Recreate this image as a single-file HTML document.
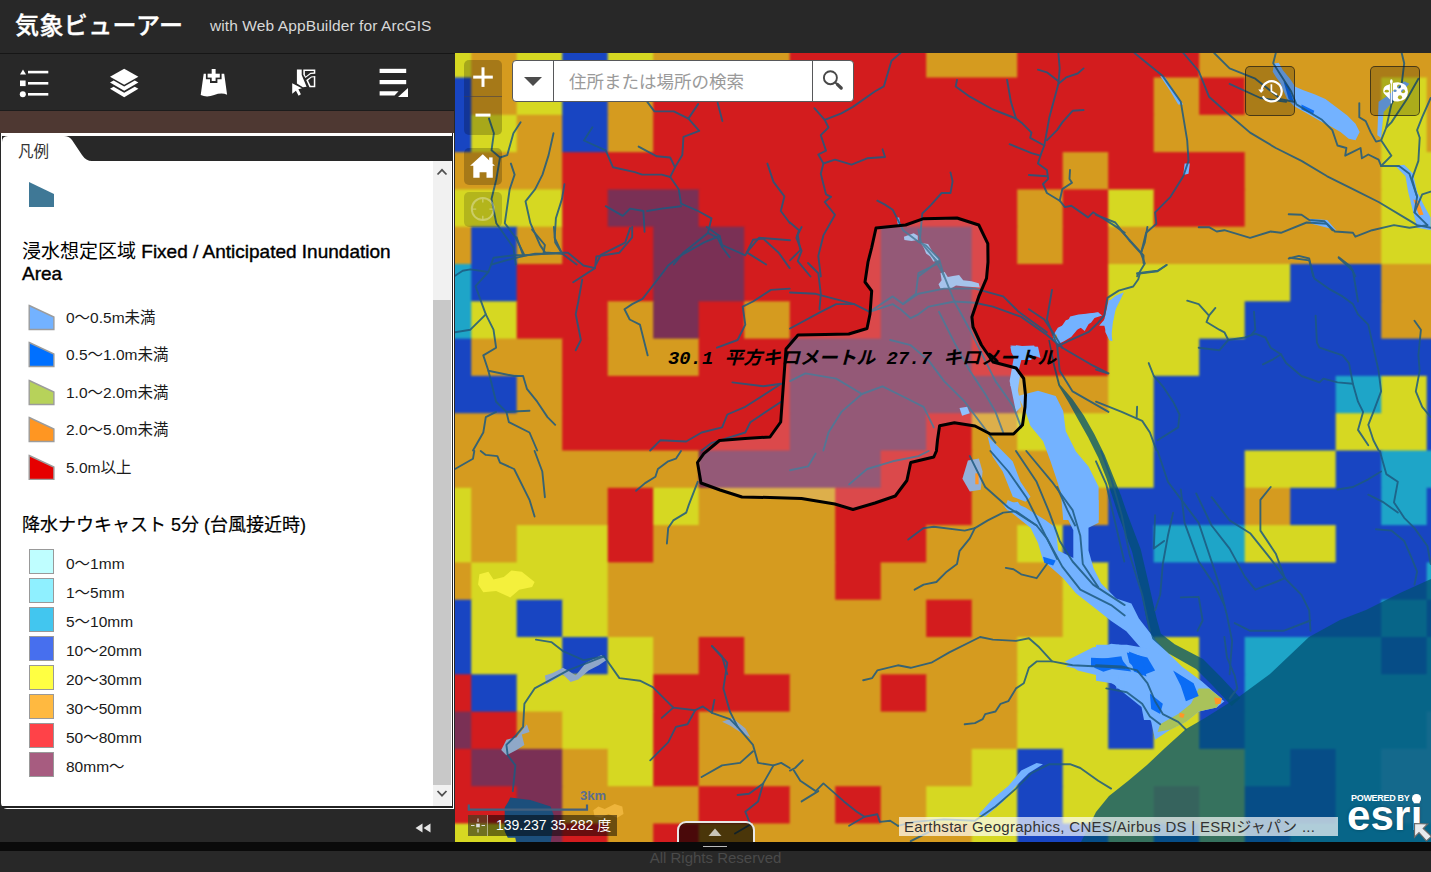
<!DOCTYPE html>
<html lang="ja"><head><meta charset="utf-8"><title>気象ビューアー</title>
<style>
*{box-sizing:border-box;margin:0;padding:0}
html,body{width:1431px;height:872px;overflow:hidden;background:#282828;font-family:"Liberation Sans","Noto Sans CJK JP",sans-serif}
.abs{position:absolute}
#hdr{left:0;top:0;width:1431px;height:54px;background:#282828;border-bottom:1px solid #161616}
#title{left:15px;top:9px;font-size:24px;font-weight:500;-webkit-text-stroke:.35px #fff;color:#fff;line-height:34px;white-space:nowrap;letter-spacing:.4px}
#sub{left:210px;top:16px;letter-spacing:.1px;font-size:15.5px;color:#d8d8d8;line-height:20px;white-space:nowrap}
#iconbar{left:0;top:54px;width:454px;height:56px;background:#282828}
#brown{left:0;top:110px;width:454px;height:23px;background:#4e3832;border-top:1px solid #1c1c1c}
#panel{left:1px;top:133px;width:453px;height:676px;background:#fff;border-radius:0 0 0 6px}
#tabstrip{left:2px;top:136px;width:450px;height:25px;background:#282828}
#lfoot{left:0;top:809px;width:454px;height:33px;background:#282828}
#strip{left:0;top:842px;width:1431px;height:9px;background:#0a0a0a}
#foot{left:0;top:851px;width:1431px;height:21px;background:#282828;color:#4a4a4a;font-size:15px;text-align:center;line-height:13px}
.lh{left:22px;font-size:19px;font-weight:normal;color:#000;line-height:22px;width:400px;-webkit-text-stroke:.4px #000}
.li{left:66px;font-size:15.5px;letter-spacing:0;color:#1a1a1a;line-height:18px;white-space:nowrap}
.sq{left:29px;width:25px;height:25px;border:1px solid #999}
#map{left:455px;top:53px;width:976px;height:789px;overflow:hidden}
.wbtn{background:rgba(0,0,0,.22);border-radius:5px}
</style></head><body>
<div id="hdr" class="abs"></div>
<div id="title" class="abs">気象ビューアー</div>
<div id="sub" class="abs">with Web AppBuilder for ArcGIS</div>
<div id="iconbar" class="abs"></div>
<div id="brown" class="abs"></div>
<div id="panel" class="abs"></div>
<div id="tabstrip" class="abs"></div>
<div id="lfoot" class="abs"></div>

<!-- map -->
<svg id="map" class="abs" viewBox="455 53 976 789">
<defs><filter id="gb" x="445" y="43" width="996" height="809" filterUnits="userSpaceOnUse" color-interpolation-filters="sRGB"><feGaussianBlur stdDeviation="1"/></filter></defs>
<g filter="url(#gb)">
<rect x="449" y="47" width="23.5" height="31.8" fill="#d6d822"/>
<rect x="471.2" y="47" width="46.8" height="31.8" fill="#d59b1f"/>
<rect x="516.7" y="47" width="46.8" height="31.8" fill="#d6d822"/>
<rect x="562.2" y="47" width="46.8" height="31.8" fill="#1845c2"/>
<rect x="607.7" y="47" width="46.8" height="31.8" fill="#d6d822"/>
<rect x="653.2" y="47" width="137.8" height="31.8" fill="#d59b1f"/>
<rect x="789.7" y="47" width="137.8" height="31.8" fill="#d31c1e"/>
<rect x="926.2" y="47" width="92.3" height="31.8" fill="#d59b1f"/>
<rect x="1017.2" y="47" width="183.3" height="31.8" fill="#d31c1e"/>
<rect x="1199.2" y="47" width="239.1" height="31.8" fill="#d59b1f"/>
<rect x="449" y="77.5" width="23.5" height="38.6" fill="#1845c2"/>
<rect x="471.2" y="77.5" width="46.8" height="38.6" fill="#d59b1f"/>
<rect x="516.7" y="77.5" width="46.8" height="38.6" fill="#d6d822"/>
<rect x="562.2" y="77.5" width="46.8" height="38.6" fill="#1845c2"/>
<rect x="607.7" y="77.5" width="46.8" height="38.6" fill="#d59b1f"/>
<rect x="653.2" y="77.5" width="501.8" height="38.6" fill="#d31c1e"/>
<rect x="1153.7" y="77.5" width="46.8" height="38.6" fill="#d59b1f"/>
<rect x="1199.2" y="77.5" width="46.8" height="38.6" fill="#d31c1e"/>
<rect x="1244.7" y="77.5" width="137.8" height="38.6" fill="#d59b1f"/>
<rect x="1381.2" y="77.5" width="46.8" height="38.6" fill="#d6d822"/>
<rect x="1426.7" y="77.5" width="11.6" height="38.6" fill="#d59b1f"/>
<rect x="449" y="114.8" width="23.5" height="38.6" fill="#1845c2"/>
<rect x="471.2" y="114.8" width="46.8" height="38.6" fill="#d6d822"/>
<rect x="516.7" y="114.8" width="46.8" height="38.6" fill="#d59b1f"/>
<rect x="562.2" y="114.8" width="46.8" height="38.6" fill="#1845c2"/>
<rect x="607.7" y="114.8" width="46.8" height="38.6" fill="#d59b1f"/>
<rect x="653.2" y="114.8" width="501.8" height="38.6" fill="#d31c1e"/>
<rect x="1153.7" y="114.8" width="228.8" height="38.6" fill="#d59b1f"/>
<rect x="1381.2" y="114.8" width="46.8" height="38.6" fill="#d6d822"/>
<rect x="1426.7" y="114.8" width="11.6" height="38.6" fill="#d59b1f"/>
<rect x="449" y="152.1" width="114.5" height="38.6" fill="#d59b1f"/>
<rect x="562.2" y="152.1" width="501.8" height="38.6" fill="#d31c1e"/>
<rect x="1062.7" y="152.1" width="46.8" height="38.6" fill="#d59b1f"/>
<rect x="1108.2" y="152.1" width="137.8" height="38.6" fill="#d31c1e"/>
<rect x="1244.7" y="152.1" width="137.8" height="38.6" fill="#d59b1f"/>
<rect x="1381.2" y="152.1" width="57.1" height="38.6" fill="#d6d822"/>
<rect x="449" y="189.4" width="114.5" height="38.6" fill="#d6d822"/>
<rect x="562.2" y="189.4" width="46.8" height="38.6" fill="#d31c1e"/>
<rect x="607.7" y="189.4" width="92.3" height="38.6" fill="#7a3055"/>
<rect x="698.7" y="189.4" width="319.8" height="38.6" fill="#d31c1e"/>
<rect x="1017.2" y="189.4" width="46.8" height="38.6" fill="#d59b1f"/>
<rect x="1062.7" y="189.4" width="46.8" height="38.6" fill="#d31c1e"/>
<rect x="1108.2" y="189.4" width="46.8" height="38.6" fill="#d6d822"/>
<rect x="1153.7" y="189.4" width="92.3" height="38.6" fill="#d31c1e"/>
<rect x="1244.7" y="189.4" width="137.8" height="38.6" fill="#d59b1f"/>
<rect x="1381.2" y="189.4" width="57.1" height="38.6" fill="#d6d822"/>
<rect x="449" y="226.7" width="23.5" height="38.6" fill="#d59b1f"/>
<rect x="471.2" y="226.7" width="46.8" height="38.6" fill="#1845c2"/>
<rect x="516.7" y="226.7" width="46.8" height="38.6" fill="#d59b1f"/>
<rect x="562.2" y="226.7" width="92.3" height="38.6" fill="#d31c1e"/>
<rect x="653.2" y="226.7" width="92.3" height="38.6" fill="#7a3055"/>
<rect x="744.2" y="226.7" width="137.8" height="38.6" fill="#d31c1e"/>
<rect x="880.7" y="226.7" width="92.3" height="38.6" fill="#7a3055"/>
<rect x="971.7" y="226.7" width="46.8" height="38.6" fill="#d31c1e"/>
<rect x="1017.2" y="226.7" width="46.8" height="38.6" fill="#d59b1f"/>
<rect x="1062.7" y="226.7" width="46.8" height="38.6" fill="#d31c1e"/>
<rect x="1108.2" y="226.7" width="274.3" height="38.6" fill="#d59b1f"/>
<rect x="1381.2" y="226.7" width="57.1" height="38.6" fill="#d6d822"/>
<rect x="449" y="264" width="23.5" height="38.6" fill="#1ea5c8"/>
<rect x="471.2" y="264" width="46.8" height="38.6" fill="#1845c2"/>
<rect x="516.7" y="264" width="137.8" height="38.6" fill="#d31c1e"/>
<rect x="653.2" y="264" width="92.3" height="38.6" fill="#7a3055"/>
<rect x="744.2" y="264" width="137.8" height="38.6" fill="#d31c1e"/>
<rect x="880.7" y="264" width="92.3" height="38.6" fill="#7a3055"/>
<rect x="971.7" y="264" width="137.8" height="38.6" fill="#d31c1e"/>
<rect x="1108.2" y="264" width="183.3" height="38.6" fill="#d6d822"/>
<rect x="1290.2" y="264" width="92.3" height="38.6" fill="#1845c2"/>
<rect x="1381.2" y="264" width="57.1" height="38.6" fill="#d59b1f"/>
<rect x="449" y="301.3" width="23.5" height="38.6" fill="#1ea5c8"/>
<rect x="471.2" y="301.3" width="46.8" height="38.6" fill="#d6d822"/>
<rect x="516.7" y="301.3" width="92.3" height="38.6" fill="#d31c1e"/>
<rect x="607.7" y="301.3" width="46.8" height="38.6" fill="#d59b1f"/>
<rect x="653.2" y="301.3" width="46.8" height="38.6" fill="#7a3055"/>
<rect x="698.7" y="301.3" width="46.8" height="38.6" fill="#d31c1e"/>
<rect x="744.2" y="301.3" width="46.8" height="38.6" fill="#d59b1f"/>
<rect x="789.7" y="301.3" width="92.3" height="38.6" fill="#d31c1e"/>
<rect x="880.7" y="301.3" width="92.3" height="38.6" fill="#7a3055"/>
<rect x="971.7" y="301.3" width="137.8" height="38.6" fill="#d31c1e"/>
<rect x="1108.2" y="301.3" width="137.8" height="38.6" fill="#d6d822"/>
<rect x="1244.7" y="301.3" width="137.8" height="38.6" fill="#1845c2"/>
<rect x="1381.2" y="301.3" width="57.1" height="38.6" fill="#d59b1f"/>
<rect x="449" y="338.6" width="23.5" height="38.6" fill="#1845c2"/>
<rect x="471.2" y="338.6" width="92.3" height="38.6" fill="#d59b1f"/>
<rect x="562.2" y="338.6" width="46.8" height="38.6" fill="#d31c1e"/>
<rect x="607.7" y="338.6" width="92.3" height="38.6" fill="#d59b1f"/>
<rect x="698.7" y="338.6" width="92.3" height="38.6" fill="#d31c1e"/>
<rect x="789.7" y="338.6" width="183.3" height="38.6" fill="#7a3055"/>
<rect x="971.7" y="338.6" width="137.8" height="38.6" fill="#d31c1e"/>
<rect x="1108.2" y="338.6" width="92.3" height="38.6" fill="#d6d822"/>
<rect x="1199.2" y="338.6" width="239.1" height="38.6" fill="#1845c2"/>
<rect x="449" y="375.9" width="69" height="38.6" fill="#1845c2"/>
<rect x="516.7" y="375.9" width="46.8" height="38.6" fill="#d59b1f"/>
<rect x="562.2" y="375.9" width="228.8" height="38.6" fill="#d31c1e"/>
<rect x="789.7" y="375.9" width="228.8" height="38.6" fill="#7a3055"/>
<rect x="1017.2" y="375.9" width="92.3" height="38.6" fill="#d59b1f"/>
<rect x="1108.2" y="375.9" width="46.8" height="38.6" fill="#d6d822"/>
<rect x="1153.7" y="375.9" width="183.3" height="38.6" fill="#1845c2"/>
<rect x="1335.7" y="375.9" width="46.8" height="38.6" fill="#1ea5c8"/>
<rect x="1381.2" y="375.9" width="46.8" height="38.6" fill="#d6d822"/>
<rect x="1426.7" y="375.9" width="11.6" height="38.6" fill="#1845c2"/>
<rect x="449" y="413.2" width="114.5" height="38.6" fill="#d59b1f"/>
<rect x="562.2" y="413.2" width="228.8" height="38.6" fill="#d31c1e"/>
<rect x="789.7" y="413.2" width="137.8" height="38.6" fill="#7a3055"/>
<rect x="926.2" y="413.2" width="46.8" height="38.6" fill="#d31c1e"/>
<rect x="971.7" y="413.2" width="46.8" height="38.6" fill="#d59b1f"/>
<rect x="1017.2" y="413.2" width="137.8" height="38.6" fill="#d6d822"/>
<rect x="1153.7" y="413.2" width="183.3" height="38.6" fill="#1845c2"/>
<rect x="1335.7" y="413.2" width="92.3" height="38.6" fill="#d6d822"/>
<rect x="1426.7" y="413.2" width="11.6" height="38.6" fill="#1845c2"/>
<rect x="449" y="450.5" width="251" height="38.6" fill="#d59b1f"/>
<rect x="698.7" y="450.5" width="183.3" height="38.6" fill="#7a3055"/>
<rect x="880.7" y="450.5" width="92.3" height="38.6" fill="#d31c1e"/>
<rect x="971.7" y="450.5" width="92.3" height="38.6" fill="#d59b1f"/>
<rect x="1062.7" y="450.5" width="92.3" height="38.6" fill="#d6d822"/>
<rect x="1153.7" y="450.5" width="92.3" height="38.6" fill="#1845c2"/>
<rect x="1244.7" y="450.5" width="92.3" height="38.6" fill="#d6d822"/>
<rect x="1335.7" y="450.5" width="46.8" height="38.6" fill="#1845c2"/>
<rect x="1381.2" y="450.5" width="57.1" height="38.6" fill="#1ea5c8"/>
<rect x="449" y="487.8" width="23.5" height="38.6" fill="#d6d822"/>
<rect x="471.2" y="487.8" width="137.8" height="38.6" fill="#d59b1f"/>
<rect x="607.7" y="487.8" width="46.8" height="38.6" fill="#d31c1e"/>
<rect x="653.2" y="487.8" width="46.8" height="38.6" fill="#d6d822"/>
<rect x="698.7" y="487.8" width="137.8" height="38.6" fill="#d59b1f"/>
<rect x="835.2" y="487.8" width="137.8" height="38.6" fill="#d31c1e"/>
<rect x="971.7" y="487.8" width="137.8" height="38.6" fill="#d59b1f"/>
<rect x="1108.2" y="487.8" width="137.8" height="38.6" fill="#1845c2"/>
<rect x="1244.7" y="487.8" width="46.8" height="38.6" fill="#d59b1f"/>
<rect x="1290.2" y="487.8" width="92.3" height="38.6" fill="#1845c2"/>
<rect x="1381.2" y="487.8" width="46.8" height="38.6" fill="#1ea5c8"/>
<rect x="1426.7" y="487.8" width="11.6" height="38.6" fill="#1845c2"/>
<rect x="449" y="525.1" width="23.5" height="38.6" fill="#d6d822"/>
<rect x="471.2" y="525.1" width="46.8" height="38.6" fill="#d59b1f"/>
<rect x="516.7" y="525.1" width="92.3" height="38.6" fill="#d6d822"/>
<rect x="607.7" y="525.1" width="46.8" height="38.6" fill="#d31c1e"/>
<rect x="653.2" y="525.1" width="183.3" height="38.6" fill="#d59b1f"/>
<rect x="835.2" y="525.1" width="92.3" height="38.6" fill="#d31c1e"/>
<rect x="926.2" y="525.1" width="92.3" height="38.6" fill="#d59b1f"/>
<rect x="1017.2" y="525.1" width="46.8" height="38.6" fill="#d6d822"/>
<rect x="1062.7" y="525.1" width="92.3" height="38.6" fill="#1845c2"/>
<rect x="1153.7" y="525.1" width="92.3" height="38.6" fill="#1ea5c8"/>
<rect x="1244.7" y="525.1" width="92.3" height="38.6" fill="#d6d822"/>
<rect x="1335.7" y="525.1" width="102.6" height="38.6" fill="#1845c2"/>
<rect x="449" y="562.4" width="23.5" height="38.6" fill="#d59b1f"/>
<rect x="471.2" y="562.4" width="137.8" height="38.6" fill="#d6d822"/>
<rect x="607.7" y="562.4" width="228.8" height="38.6" fill="#d59b1f"/>
<rect x="835.2" y="562.4" width="46.8" height="38.6" fill="#d31c1e"/>
<rect x="880.7" y="562.4" width="183.3" height="38.6" fill="#d59b1f"/>
<rect x="1062.7" y="562.4" width="46.8" height="38.6" fill="#d6d822"/>
<rect x="1108.2" y="562.4" width="319.8" height="38.6" fill="#1845c2"/>
<rect x="1426.7" y="562.4" width="11.6" height="38.6" fill="#1ea5c8"/>
<rect x="449" y="599.7" width="23.5" height="38.6" fill="#1845c2"/>
<rect x="471.2" y="599.7" width="46.8" height="38.6" fill="#d6d822"/>
<rect x="516.7" y="599.7" width="46.8" height="38.6" fill="#1845c2"/>
<rect x="562.2" y="599.7" width="46.8" height="38.6" fill="#d6d822"/>
<rect x="607.7" y="599.7" width="319.8" height="38.6" fill="#d59b1f"/>
<rect x="926.2" y="599.7" width="46.8" height="38.6" fill="#d31c1e"/>
<rect x="971.7" y="599.7" width="92.3" height="38.6" fill="#d59b1f"/>
<rect x="1062.7" y="599.7" width="46.8" height="38.6" fill="#d6d822"/>
<rect x="1108.2" y="599.7" width="274.3" height="38.6" fill="#1845c2"/>
<rect x="1381.2" y="599.7" width="46.8" height="38.6" fill="#1ea5c8"/>
<rect x="1426.7" y="599.7" width="11.6" height="38.6" fill="#1845c2"/>
<rect x="449" y="637" width="23.5" height="38.6" fill="#1845c2"/>
<rect x="471.2" y="637" width="92.3" height="38.6" fill="#d6d822"/>
<rect x="562.2" y="637" width="46.8" height="38.6" fill="#1845c2"/>
<rect x="607.7" y="637" width="46.8" height="38.6" fill="#d6d822"/>
<rect x="653.2" y="637" width="46.8" height="38.6" fill="#d59b1f"/>
<rect x="698.7" y="637" width="46.8" height="38.6" fill="#d31c1e"/>
<rect x="744.2" y="637" width="274.3" height="38.6" fill="#d59b1f"/>
<rect x="1017.2" y="637" width="92.3" height="38.6" fill="#d6d822"/>
<rect x="1108.2" y="637" width="46.8" height="38.6" fill="#1845c2"/>
<rect x="1153.7" y="637" width="46.8" height="38.6" fill="#d6d822"/>
<rect x="1199.2" y="637" width="46.8" height="38.6" fill="#1845c2"/>
<rect x="1244.7" y="637" width="137.8" height="38.6" fill="#1ea5c8"/>
<rect x="1381.2" y="637" width="46.8" height="38.6" fill="#1845c2"/>
<rect x="1426.7" y="637" width="11.6" height="38.6" fill="#1ea5c8"/>
<rect x="449" y="674.3" width="23.5" height="38.6" fill="#d31c1e"/>
<rect x="471.2" y="674.3" width="46.8" height="38.6" fill="#1845c2"/>
<rect x="516.7" y="674.3" width="137.8" height="38.6" fill="#d6d822"/>
<rect x="653.2" y="674.3" width="137.8" height="38.6" fill="#d31c1e"/>
<rect x="789.7" y="674.3" width="92.3" height="38.6" fill="#d59b1f"/>
<rect x="880.7" y="674.3" width="46.8" height="38.6" fill="#d31c1e"/>
<rect x="926.2" y="674.3" width="92.3" height="38.6" fill="#d59b1f"/>
<rect x="1017.2" y="674.3" width="92.3" height="38.6" fill="#d6d822"/>
<rect x="1108.2" y="674.3" width="46.8" height="38.6" fill="#1845c2"/>
<rect x="1153.7" y="674.3" width="46.8" height="38.6" fill="#d6d822"/>
<rect x="1199.2" y="674.3" width="46.8" height="38.6" fill="#1845c2"/>
<rect x="1244.7" y="674.3" width="193.6" height="38.6" fill="#1ea5c8"/>
<rect x="449" y="711.6" width="23.5" height="38.6" fill="#7a3055"/>
<rect x="471.2" y="711.6" width="46.8" height="38.6" fill="#d31c1e"/>
<rect x="516.7" y="711.6" width="46.8" height="38.6" fill="#d59b1f"/>
<rect x="562.2" y="711.6" width="92.3" height="38.6" fill="#d6d822"/>
<rect x="653.2" y="711.6" width="46.8" height="38.6" fill="#d31c1e"/>
<rect x="698.7" y="711.6" width="319.8" height="38.6" fill="#d59b1f"/>
<rect x="1017.2" y="711.6" width="92.3" height="38.6" fill="#d6d822"/>
<rect x="1108.2" y="711.6" width="46.8" height="38.6" fill="#1845c2"/>
<rect x="1153.7" y="711.6" width="46.8" height="38.6" fill="#d6d822"/>
<rect x="1199.2" y="711.6" width="46.8" height="38.6" fill="#1845c2"/>
<rect x="1244.7" y="711.6" width="183.3" height="38.6" fill="#1ea5c8"/>
<rect x="1426.7" y="711.6" width="11.6" height="38.6" fill="#50b4d7"/>
<rect x="449" y="748.9" width="23.5" height="38.6" fill="#d31c1e"/>
<rect x="471.2" y="748.9" width="92.3" height="38.6" fill="#7a3055"/>
<rect x="562.2" y="748.9" width="46.8" height="38.6" fill="#d59b1f"/>
<rect x="607.7" y="748.9" width="46.8" height="38.6" fill="#d6d822"/>
<rect x="653.2" y="748.9" width="46.8" height="38.6" fill="#d31c1e"/>
<rect x="698.7" y="748.9" width="274.3" height="38.6" fill="#d59b1f"/>
<rect x="971.7" y="748.9" width="46.8" height="38.6" fill="#d6d822"/>
<rect x="1017.2" y="748.9" width="46.8" height="38.6" fill="#1845c2"/>
<rect x="1062.7" y="748.9" width="183.3" height="38.6" fill="#d6d822"/>
<rect x="1244.7" y="748.9" width="46.8" height="38.6" fill="#1ea5c8"/>
<rect x="1290.2" y="748.9" width="46.8" height="38.6" fill="#1845c2"/>
<rect x="1335.7" y="748.9" width="46.8" height="38.6" fill="#1ea5c8"/>
<rect x="1381.2" y="748.9" width="57.1" height="38.6" fill="#50b4d7"/>
<rect x="449" y="786.2" width="69" height="38.6" fill="#d31c1e"/>
<rect x="516.7" y="786.2" width="46.8" height="38.6" fill="#7a3055"/>
<rect x="562.2" y="786.2" width="137.8" height="38.6" fill="#d59b1f"/>
<rect x="698.7" y="786.2" width="92.3" height="38.6" fill="#d31c1e"/>
<rect x="789.7" y="786.2" width="46.8" height="38.6" fill="#d59b1f"/>
<rect x="835.2" y="786.2" width="46.8" height="38.6" fill="#d31c1e"/>
<rect x="880.7" y="786.2" width="46.8" height="38.6" fill="#d59b1f"/>
<rect x="926.2" y="786.2" width="92.3" height="38.6" fill="#d6d822"/>
<rect x="1017.2" y="786.2" width="46.8" height="38.6" fill="#1845c2"/>
<rect x="1062.7" y="786.2" width="92.3" height="38.6" fill="#d6d822"/>
<rect x="1153.7" y="786.2" width="46.8" height="38.6" fill="#d59b1f"/>
<rect x="1199.2" y="786.2" width="46.8" height="38.6" fill="#d6d822"/>
<rect x="1244.7" y="786.2" width="92.3" height="38.6" fill="#1845c2"/>
<rect x="1335.7" y="786.2" width="46.8" height="38.6" fill="#1ea5c8"/>
<rect x="1381.2" y="786.2" width="57.1" height="38.6" fill="#50b4d7"/>
<rect x="449" y="823.5" width="69" height="25.8" fill="#d6d822"/>
<rect x="516.7" y="823.5" width="46.8" height="25.8" fill="#7a3055"/>
<rect x="562.2" y="823.5" width="46.8" height="25.8" fill="#d31c1e"/>
<rect x="607.7" y="823.5" width="46.8" height="25.8" fill="#d59b1f"/>
<rect x="653.2" y="823.5" width="46.8" height="25.8" fill="#d31c1e"/>
<rect x="698.7" y="823.5" width="274.3" height="25.8" fill="#d59b1f"/>
<rect x="971.7" y="823.5" width="46.8" height="25.8" fill="#d6d822"/>
<rect x="1017.2" y="823.5" width="92.3" height="25.8" fill="#1845c2"/>
<rect x="1108.2" y="823.5" width="46.8" height="25.8" fill="#d6d822"/>
<rect x="1153.7" y="823.5" width="46.8" height="25.8" fill="#1845c2"/>
<rect x="1199.2" y="823.5" width="46.8" height="25.8" fill="#d6d822"/>
<rect x="1244.7" y="823.5" width="46.8" height="25.8" fill="#1845c2"/>
<rect x="1290.2" y="823.5" width="148.1" height="25.8" fill="#1ea5c8"/>
</g>
<g stroke="none"><polygon points="1017.8,395.9 1038.0,390.8 1055.7,395.9 1063.2,411.0 1065.8,431.2 1075.9,451.4 1088.5,466.5 1098.6,486.7 1098.6,520.0 1063.2,520.0 1060.7,491.7 1050.6,461.5 1043.1,441.3 1030.5,426.1 1025.4,411.0" fill="#73b2ff"/>
<polygon points="987.6,436.2 997.7,446.3 1012.8,461.5 1020.4,481.6 1030.5,496.8 1025.4,501.8 1012.8,496.8 1002.7,471.5 992.6,456.4" fill="#73b2ff"/>
<polygon points="1065.8,320.2 1086.0,313.9 1098.6,312.6 1091.0,322.7 1075.9,330.3 1063.2,337.8 1055.7,335.3" fill="#73b2ff"/>
<polygon points="1108.7,300.0 1118.7,300.0 1113.7,315.1 1111.2,337.8 1106.1,332.8 1103.6,322.7" fill="#73b2ff"/>
<polygon points="1010.3,345.4 1038.0,346.7 1040.5,358.0 1030.5,354.2 1017.8,353.0" fill="#73b2ff"/>
<polygon points="1012.8,375.7 1020.4,373.2 1017.8,390.8 1010.3,385.8" fill="#73b2ff"/>
<polygon points="1002.7,504.3 1017.8,501.8 1022.9,509.4 1007.7,510.6" fill="#73b2ff"/>
<polygon points="1063.2,500.0 1098.6,500.0 1098.6,522.7 1088.5,527.7 1088.5,550.5 1093.5,568.1 1101.1,583.2 1116.2,598.4 1131.4,603.4 1138.9,618.6 1156.6,641.3 1166.7,651.4 1181.8,666.5 1202.0,681.6 1222.2,699.3 1214.6,706.9 1197.0,711.9 1181.8,720.0 1144.0,720.0 1141.5,706.9 1116.2,686.7 1108.7,676.6 1091.0,671.5 1065.8,666.5 1091.0,651.4 1111.2,643.8 1131.4,646.3 1141.5,648.8 1126.3,631.2 1111.2,621.1 1098.6,611.0 1075.9,593.3 1063.2,578.2 1043.1,560.5 1038.0,542.9 1030.5,527.7 1005.2,507.6 1007.7,500.0 1025.4,507.6 1045.6,520.2 1055.7,527.7 1058.2,550.5 1073.3,558.0 1073.3,530.3 1065.8,515.1" fill="#73b2ff"/>
<polygon points="1096.0,644.7 1126.8,644.7 1155.1,649.8 1173.1,665.3 1198.7,683.2 1209.0,688.4 1219.3,697.4 1224.4,701.2 1216.7,707.6 1198.7,711.5 1185.9,721.8 1170.5,729.5 1155.1,739.7 1151.2,721.8 1142.2,703.8 1121.7,688.4 1111.4,683.2 1096.0,680.7" fill="#73b2ff"/>
<polygon points="1378.6,101.8 1386.3,96.7 1404.2,81.3 1409.4,83.8 1394.0,100.5 1383.7,112.1 1381.1,137.8 1377.3,135.2" fill="#73b2ff"/>
<polygon points="1395.3,166.0 1404.2,164.7 1413.2,173.7 1417.1,191.7 1424.8,207.1 1430.7,217.4 1430.7,230.2 1417.1,227.7 1413.2,212.3 1408.1,191.7 1405.5,176.3" fill="#73b2ff"/>
<polygon points="1309.2,218.7 1327.2,220.0 1336.2,230.2 1327.2,227.7 1311.8,223.8" fill="#73b2ff"/>
<polygon points="1160.2,76.1 1165.4,77.4 1175.6,94.1 1183.3,104.4 1178.2,104.4 1170.5,91.5" fill="#73b2ff"/>
<polygon points="1184.6,163.5 1189.8,163.5 1188.5,173.7 1183.3,175.0" fill="#73b2ff"/>
<polygon points="1274.0,63.5 1278.8,62.8 1282.9,70.3 1289.8,78.5 1295.3,86.8 1303.5,90.2 1314.5,94.3 1325.4,99.1 1336.4,107.3 1347.3,115.5 1355.5,123.8 1359.7,132.0 1355.5,140.2 1348.7,138.8 1340.5,132.0 1330.9,126.5 1322.7,122.4 1313.1,116.9 1303.5,111.4 1293.9,105.9 1287.1,99.1 1282.9,89.5 1280.2,82.7 1276.1,77.2 1272.7,71.7" fill="#73b2ff"/>
<polygon points="959.5,408.1 967.2,406.8 969.8,413.2 962.1,415.8" fill="#73b2ff"/>
<polygon points="896.6,217.4 899.2,217.4 900.5,225.1 897.9,225.1" fill="#73b2ff"/>
<polygon points="1016.0,345.2 1026.3,346.4 1021.2,360.6 1016.0,381.1 1021.2,406.8 1016.0,411.9 1009.6,381.1" fill="#73b2ff"/>
<polygon points="1052.7,336.1 1057.8,327.8 1066.1,323.7 1070.2,316.5 1078.5,314.4 1088.8,313.4 1098.1,312.3 1102.2,315.4 1092.9,318.5 1088.8,323.7 1084.7,330.9 1079.5,326.8 1075.4,331.9 1071.2,337.1 1064.0,341.2 1057.8,344.3 1053.7,340.2" fill="#73b2ff"/>
<polygon points="1123.9,292.2 1119.8,301.0 1115.6,309.2 1113.6,319.6 1110.5,327.8 1112.5,341.2 1109.4,340.2 1105.3,331.9 1106.3,325.8 1099.1,325.8 1105.3,318.5 1107.4,309.2 1109.4,301.0 1115.6,295.8" fill="#73b2ff"/>
<polygon points="1010.3,346.4 1034.1,345.4 1037.2,352.6 1031.0,360.0 1015.5,360.0 1011.4,352.6" fill="#73b2ff"/>
<polygon points="903.9,236.8 913.7,233.2 917.8,235.8 917.8,239.9 911.6,241.0 904.4,239.9" fill="#8fb4e6"/>
<polygon points="920.9,243.0 928.1,244.1 932.3,251.3 938.5,258.5 939.5,260.6 933.3,261.6 930.2,256.5 926.1,253.4 924.0,248.2" fill="#8fb4e6"/>
<polygon points="940.5,273.0 944.7,271.9 947.8,277.1 952.9,276.1 959.1,275.0 963.2,280.2 971.5,281.2 978.7,283.3 979.8,287.4 965.3,286.4 956.0,285.4 950.9,288.5 940.5,288.5 938.5,284.3 941.6,280.2" fill="#8fb4e6"/>
<polygon points="967.9,460.5 978.9,458.6 982.6,471.5 980.8,489.8 969.8,491.6 962.4,478.8" fill="#93b0d8"/>
<polygon points="544.9,675.5 552.6,673.0 562.9,667.8 568.0,670.4 575.7,675.5 586.0,662.7 601.4,655.0 606.6,660.1 598.8,665.3 588.6,670.4 578.3,679.4 570.6,682.0 562.9,674.2 552.6,680.7 546.2,684.5" fill="#8fa8c8"/>
<polygon points="501.2,750.0 506.4,739.7 516.6,737.2 526.9,724.3 529.5,732.0 521.8,734.6 524.4,744.9 516.6,750.0 506.4,755.2" fill="#8fa8c8"/>
<polygon points="722.1,721.8 732.4,717.9 745.3,728.2 750.4,737.2 740.1,732.0 729.9,725.6" fill="#8fa8c8"/>
<polygon points="978.8,814.2 992.9,798.8 1008.3,786.0 1021.2,770.6 1036.6,762.9 1043.0,764.2 1028.9,773.1 1016.0,786.0 1003.2,801.4 985.2,816.8" fill="#73b2ff"/>
<polygon points="1064.9,661.4 1093.1,647.3 1118.8,644.7 1124.7,647.3 1124.7,688.4 1116.2,688.4 1118.8,675.5 1098.2,675.5 1077.7,670.4" fill="#73b2ff"/>
<polygon points="1198.7,688.4 1209.0,688.4 1221.9,698.6 1216.7,707.6 1198.7,711.5 1185.9,721.8 1170.5,729.5 1157.6,732.0 1160.2,724.3 1178.2,714.1 1191.0,703.8" fill="#a9c25a"/>
<polygon points="1214.2,697.4 1221.9,698.6 1220.6,703.8 1215.4,704.3" fill="#ff9626"/>
<polygon points="1179.5,712.8 1184.6,714.1 1183.3,717.9 1179.5,717.1" fill="#ff9626"/>
<polygon points="1126.8,652.4 1147.4,657.5 1155.1,670.4 1142.2,675.5 1129.4,662.7" fill="#0a6cf5"/>
<polygon points="1173.1,670.4 1193.6,683.2 1198.7,696.1 1185.9,701.2 1180.8,685.8" fill="#0a6cf5"/>
<polygon points="1096.0,660.1 1119.1,661.4 1121.7,667.8 1098.6,669.1" fill="#0a6cf5"/>
<polygon points="1149.9,693.5 1162.8,703.8 1160.2,714.1 1151.2,708.9" fill="#0a6cf5"/>
<polygon points="1091.0,657.7 1121.3,658.9 1131.4,671.5 1111.2,669.0 1091.0,666.5" fill="#0a6cf5"/>
<polygon points="1128.8,651.4 1141.5,656.4 1146.5,676.6 1133.9,671.5" fill="#0a6cf5"/>
<polygon points="1043.1,556.8 1055.7,560.5 1053.2,565.6 1044.3,563.1" fill="#0a6cf5"/>
<polygon points="1283.5,81.3 1288.7,86.4 1293.8,101.8 1288.7,99.2" fill="#0a6cf5"/>
<polygon points="1301.5,104.4 1314.3,110.8 1313.1,114.6 1301.5,109.5" fill="#0a6cf5"/>
<polygon points="1413.2,199.4 1418.4,200.7 1423.5,214.8 1419.1,215.3" fill="#ff9626"/>
<polygon points="1054.7,335.0 1056.8,334.5 1057.3,339.2 1055.2,339.4" fill="#ff9626"/>
<polygon points="975.3,473.3 978.6,473.3 978.6,484.3 975.3,484.3" fill="#ff9626"/>
<polygon points="1093.1,660.1 1121.4,656.3 1123.9,665.3 1103.4,671.7 1094.4,667.8" fill="#0a6cf5"/></g>
<polygon points="479.4,574.3 488.4,571.7 493.5,579.4 503.8,576.9 511.5,570.4 521.8,571.7 534.6,582.0 532.1,587.1 519.2,589.7 510.2,597.4 496.1,591.0 483.3,592.3 478.1,584.6" fill="#f4f03c"/>
<polygon points="510.3,797.6 530.4,800.1 550.6,806.4 553.7,815.2 553.1,826.5 550.6,843.0 516.6,843.0 515.3,837.8 507.8,837.8 504.7,831.5 504.7,807.6 508.4,801.4" fill="#1c4f7c"/>
<polygon points="593.3,810.2 598.4,806.4 604.7,808.9 614.7,803.9 622.3,806.4 623.5,813.9 617.2,817.7 608.4,813.9 600.9,817.7 594.6,816.4" fill="#eeb53c"/>
<polygon points="1431.0,579.0 1400.0,593.0 1366.0,610.0 1340.0,620.0 1309.0,637.0 1270.0,674.0 1240.0,696.0 1205.0,718.0 1186.0,729.0 1165.0,748.0 1147.0,765.0 1128.0,781.0 1109.0,796.0 1096.0,812.0 1081.0,842.0 1431.0,842.0" fill="rgba(0,80,115,0.75)"/><polygon points="1048.3,340.1 1053.1,365.2 1058.3,385.6 1068.4,402.0 1077.8,419.0 1088.1,437.3 1098.3,457.8 1106.4,478.2 1113.0,498.4 1118.8,516.5 1132.1,551.8 1139.6,584.2 1146.6,619.8 1152.4,639.0 1168.7,653.4 1196.0,668.9 1212.8,685.8 1231.6,706.1 1240.4,697.9 1221.4,677.4 1203.0,659.1 1174.7,644.2 1160.8,633.4 1156.4,617.4 1148.4,582.2 1140.7,549.2 1127.2,513.5 1121.0,495.6 1113.0,475.8 1104.7,455.0 1094.3,434.1 1083.8,415.4 1072.6,399.2 1060.1,384.8 1054.9,364.8 1049.7,339.9" fill="rgba(0,80,115,0.75)"/>
<g fill="none" stroke="#1d5a80" stroke-width="1.9" stroke-linejoin="round" stroke-linecap="round" opacity="0.85">
<polyline points="489.0,118.6 493.9,133.2 491.5,150.3 500.0,157.5 496.3,179.4 491.5,198.9 496.3,223.2 513.4,247.5 515.8,264.5"/>
<polyline points="520.6,122.3 513.4,133.2 507.3,155.1 500.0,157.5"/>
<polyline points="553.5,133.2 548.6,155.1 542.5,174.6 535.2,189.2 525.5,201.3 530.4,223.2 540.1,245.1 545.0,252.4 562.0,253.6"/>
<polyline points="510.9,163.6 514.6,174.6 509.7,189.2 504.8,223.2 515.8,237.8 524.3,254.8"/>
<polyline points="564.4,184.3 562.0,198.9 555.9,218.3 554.7,237.8 562.0,253.6 576.6,264.5"/>
<polyline points="562.0,253.6 535.2,253.6 513.4,258.4 491.5,264.5"/>
<polyline points="592.4,127.2 583.9,140.5 605.7,150.3 613.0,167.3 634.9,172.1 642.2,174.6 661.7,174.6 670.2,177.0 678.7,189.2 681.1,203.7 698.1,211.0 711.5,218.3 707.9,232.9 717.6,237.8 722.4,247.5 729.7,257.2"/>
<polyline points="638.6,146.6 656.8,156.3 670.2,157.5 675.0,167.3 670.2,177.0"/>
<polyline points="647.1,101.6 654.4,111.4 673.8,111.4 688.4,118.6 699.3,130.8 683.5,136.9 682.3,155.1 675.0,167.3"/>
<polyline points="717.6,102.8 722.4,121.1"/>
<polyline points="698.1,104.1 688.4,118.6"/>
<polyline points="605.7,206.2 622.8,215.9 630.1,208.6 643.4,211.0 644.6,231.7"/>
<polyline points="647.1,211.0 661.7,208.6 681.1,206.2"/>
<polyline points="707.9,232.9 683.5,252.4 673.8,264.5"/>
<polyline points="630.1,228.1 625.2,242.6 600.9,254.8 596.0,264.5"/>
<polyline points="767.4,163.6 773.5,181.9 784.4,196.4 780.8,211.0 790.0,223.2"/>
<polyline points="790.0,240.2 758.9,237.8 746.8,252.4 766.2,264.5"/>
<polyline points="455.0,275.8 462.7,270.7 470.4,269.4 488.4,272.0 493.5,257.8 514.1,255.3 524.4,255.3 560.3,252.7 568.0,252.7 583.4,265.5 595.0,268.1 596.3,256.5 619.4,252.7 632.2,237.3 632.2,227.0"/>
<polyline points="595.0,268.1 573.2,282.2"/>
<polyline points="582.2,279.7 578.3,301.5 575.7,314.3 580.9,340.0 575.7,350.3"/>
<polyline points="516.6,237.3 523.1,255.3"/>
<polyline points="532.1,229.6 544.9,245.0 543.6,252.7"/>
<polyline points="553.9,227.0 555.2,242.4 561.6,252.7"/>
<polyline points="488.4,272.0 475.5,286.1 485.8,314.3 470.4,329.7 455.0,332.3"/>
<polyline points="485.8,314.3 493.5,329.7 496.1,347.7 483.3,355.4 488.4,370.8 514.1,376.0 523.1,376.0 526.9,388.8 537.2,401.7 547.5,417.1 555.2,424.8"/>
<polyline points="488.4,370.8 496.1,401.7 506.4,411.9 508.9,422.2 529.5,432.5 537.2,450.5"/>
<polyline points="496.1,411.9 485.8,417.1 483.3,432.5 473.0,450.5"/>
<polyline points="506.4,411.9 529.5,410.7"/>
<polyline points="789.7,268.1 778.7,252.7 763.2,238.6 753.0,239.8 745.3,255.3 722.1,245.0 719.6,236.0 704.2,242.4 681.0,255.3 668.2,265.5 660.5,275.8 642.5,298.9 632.2,304.1 624.5,309.2 629.7,319.5 639.9,324.6 647.7,355.4"/>
<polyline points="706.7,227.0 719.6,236.0"/>
<polyline points="789.7,288.6 771.0,289.9 753.0,301.5 742.7,306.6 745.3,324.6 737.6,340.0 717.0,347.7"/>
<polyline points="732.4,382.4 763.2,386.3 781.2,383.7"/>
<polyline points="781.2,383.7 745.3,406.8 727.3,414.5 722.1,427.4 701.6,432.5 686.2,441.5 660.5,440.2 650.2,450.5"/>
<polyline points="781.2,401.7 750.4,422.2 745.3,432.5 711.9,442.8 701.6,450.5"/>
<polyline points="455.0,469.0 473.0,458.7 474.3,451.0"/>
<polyline points="480.7,451.0 485.8,454.9 497.4,456.1 500.0,462.6 514.1,469.0 529.5,499.8 534.6,516.5"/>
<polyline points="534.6,451.0 542.3,471.5 544.9,497.2"/>
<polyline points="681.0,451.0 675.9,458.7 668.2,461.3 657.9,469.0 655.4,476.7 645.1,483.1 636.1,490.8"/>
<polyline points="697.7,481.8 688.8,504.9 686.2,512.6 673.3,520.4 668.2,528.1 666.9,543.5"/>
<polyline points="711.9,646.2 722.1,656.5 727.3,674.2"/>
<polyline points="535.9,639.6 551.3,642.1 562.9,651.1 583.4,660.1 604.0,656.3 619.4,678.1 639.9,680.7 652.8,687.1 673.3,707.6 695.2,710.2 702.9,706.4 711.9,712.8 729.9,719.2 737.6,726.9 753.0,744.9 758.1,762.9 773.5,765.4 781.2,762.9 789.7,768.0"/>
<polyline points="604.0,656.3 568.0,670.4 534.6,688.4 524.4,703.8 523.1,726.9 516.6,734.6 506.4,744.9 507.7,755.2 515.4,765.4 512.8,791.1"/>
<polyline points="711.9,646.0 727.3,662.7 723.4,688.4 729.9,711.5 737.6,726.9"/>
<polyline points="695.2,710.2 687.5,724.3 675.9,726.9 668.2,742.3 650.2,760.3"/>
<polyline points="673.3,707.6 661.8,717.9"/>
<polyline points="714.4,699.9 711.9,712.8"/>
<polyline points="753.0,751.3 740.1,762.9 722.1,765.4 701.6,777.0"/>
<polyline points="773.5,765.4 763.2,783.4 749.1,793.7 737.6,795.0"/>
<polyline points="763.2,783.4 758.1,801.4 745.3,811.7 750.4,824.5 735.0,833.5"/>
<polyline points="900.5,53.0 891.5,60.7 883.8,86.4 874.8,91.5 852.9,106.9 841.4,113.4 824.7,119.8"/>
<polyline points="814.4,108.2 824.7,119.8 828.5,127.5 820.8,135.2 826.0,150.6 818.3,154.5 823.4,163.5 820.8,173.7 826.0,194.3 831.1,196.8 824.7,202.0 835.0,214.8 823.4,235.4 818.3,255.9 820.8,276.5"/>
<polyline points="823.4,163.5 835.0,159.6 851.6,164.7 867.1,158.3 885.0,157.0 882.5,149.3"/>
<polyline points="790.0,222.5 799.0,230.2 796.4,237.9 801.6,250.8 797.7,261.1 810.5,276.5"/>
<polyline points="957.0,80.0 955.7,86.4 969.8,96.7 992.9,109.5 1016.0,118.5 1022.5,123.6 1031.5,132.6 1030.2,137.8 1044.3,145.5"/>
<polyline points="1007.1,80.0 1010.9,101.8 1016.0,118.5"/>
<polyline points="1058.4,53.0 1059.7,68.4 1058.4,83.8 1049.4,117.2 1044.3,145.5 1040.4,155.7 1037.9,163.5 1046.9,169.9 1048.2,178.9 1043.0,184.0 1046.9,193.0 1059.7,200.7 1064.9,207.1 1071.3,205.8 1088.0,217.4 1093.1,212.3 1113.7,225.1 1124.7,232.8"/>
<polyline points="1037.9,69.7 1046.9,72.3 1058.4,81.3"/>
<polyline points="1083.6,68.4 1077.7,73.5 1066.1,77.4 1058.4,83.8"/>
<polyline points="1083.6,110.0 1072.6,110.8 1062.3,122.4 1057.1,130.1 1046.9,140.3"/>
<polyline points="1009.6,144.2 1031.5,153.2 1040.4,155.7"/>
<polyline points="1028.9,175.0 1046.9,176.3"/>
<polyline points="1070.0,169.9 1069.5,178.9 1072.0,182.7 1062.3,189.1 1059.7,200.7"/>
<polyline points="950.5,172.4 952.6,181.4 950.5,193.0 941.6,193.0 931.3,204.6 922.3,213.5 919.7,241.8"/>
<polyline points="877.3,200.7 885.0,204.6 892.7,209.7 896.6,217.4 903.0,230.2 918.4,241.8 926.1,245.7 939.0,258.5 944.1,276.5"/>
<polyline points="939.0,261.1 918.4,276.5"/>
<polyline points="790.0,292.5 815.7,293.8 854.2,304.1 869.6,311.8 892.7,304.1 900.5,309.2 910.7,318.2 918.4,314.3 928.7,306.6 954.4,301.5 974.9,302.8 992.9,306.6 1021.2,316.9 1046.9,334.9 1062.3,347.7 1093.1,365.7 1108.5,373.4"/>
<polyline points="869.6,311.8 892.7,296.4 903.0,304.1 918.4,293.8 944.1,288.6 974.9,288.6 1003.2,296.4 1018.6,311.8 1046.9,332.3"/>
<polyline points="918.4,229.6 921.0,242.4 933.8,257.8 939.0,263.0 918.4,273.2 915.9,293.8 903.0,304.1"/>
<polyline points="933.8,257.8 944.1,275.8 954.4,301.5 969.8,329.7 985.2,360.6 995.5,381.1 1013.5,406.8 1021.2,427.4"/>
<polyline points="939.0,311.8 954.4,342.6 969.8,370.8 985.2,394.0 995.5,411.9 1003.2,432.5"/>
<polyline points="790.0,381.1 805.4,373.4 836.2,378.6 861.9,394.0 882.5,386.3 903.0,396.5 923.6,406.8 933.8,427.4"/>
<polyline points="861.9,394.0 841.4,411.9 828.5,432.5 823.4,450.5"/>
<polyline points="890.2,340.0 910.7,345.2 928.7,360.6 944.1,381.1 964.7,401.7 980.1,422.2 995.5,442.8"/>
<polyline points="1052.0,289.9 1046.9,319.5 1057.1,345.2 1059.7,370.8 1072.6,391.4 1108.5,411.9"/>
<polyline points="1028.9,309.2 1044.3,319.5 1054.6,334.9 1062.3,347.7"/>
<polyline points="790.0,260.4 800.3,250.1 797.7,234.7 801.6,227.0"/>
<polyline points="808.0,263.0 818.3,273.2 820.8,293.8 819.5,309.2"/>
<polyline points="790.0,328.5 820.8,311.8 836.2,304.1 854.2,304.1"/>
<polyline points="790.0,470.3 808.0,466.4 815.7,453.6"/>
<polyline points="849.1,484.4 867.1,469.0 892.7,461.3 918.4,456.1 928.7,451.0"/>
<polyline points="908.2,539.6 923.6,528.1 933.8,526.8 964.7,530.6 974.9,528.1"/>
<polyline points="974.9,528.1 969.8,538.3 959.5,551.2 957.0,564.0 946.7,571.7 936.4,582.0 923.6,584.6 914.6,589.7"/>
<polyline points="974.9,528.1 987.8,520.4 1003.2,512.6 1016.0,511.4 1036.6,525.5 1046.9,538.3 1062.3,566.6 1080.3,589.7 1111.1,605.1 1124.7,615.4"/>
<polyline points="969.8,456.1 985.2,487.0 1008.3,507.5 1036.6,525.5"/>
<polyline points="1005.8,567.9 1013.5,569.2 1021.2,574.3 1036.6,578.2 1046.9,564.0"/>
<polyline points="990.4,451.0 1008.3,471.5 1026.3,497.2 1041.7,528.1 1057.1,558.9"/>
<polyline points="1016.0,451.0 1036.6,481.8 1049.4,512.6 1059.7,540.9 1072.6,561.5 1093.1,584.6 1124.7,605.1"/>
<polyline points="1026.3,451.0 1052.0,481.8 1072.6,510.1 1080.3,535.8 1082.8,564.0 1098.2,587.1"/>
<polyline points="1057.1,487.0 1067.4,510.1 1075.1,525.5"/>
<polyline points="863.2,680.2 872.2,678.1 877.3,670.4 897.9,665.3 910.7,667.8 931.3,662.7 949.3,652.4 980.1,637.0 992.9,639.6 1016.0,640.9 1028.9,638.3 1039.2,647.3 1052.0,661.4"/>
<polyline points="1124.7,667.8 1072.6,665.3 1052.0,661.4 1036.6,661.4 1028.9,667.8 1023.8,683.2 1016.0,688.4 1008.3,701.2 1000.6,703.8 995.5,711.5 985.2,714.1 982.7,719.2 974.9,723.1 964.7,724.3"/>
<polyline points="790.0,770.6 795.1,768.0 802.8,760.3"/>
<polyline points="793.9,770.6 800.3,780.8 815.7,791.1 823.4,783.4 833.7,792.4 843.9,801.4 856.8,811.7 864.5,816.8 877.3,814.2 879.9,821.9 890.2,820.7 897.9,825.8"/>
<polyline points="818.3,791.1 801.6,801.4"/>
<polyline points="864.5,816.8 849.1,825.8"/>
<polyline points="897.9,825.8 913.3,821.9 944.1,819.4 974.9,820.7 995.5,806.5 1016.0,788.6 1031.5,773.1 1049.4,764.2 1070.0,764.2 1080.3,768.0 1098.2,780.8 1111.1,788.6"/>
<polyline points="928.7,832.2 910.7,841.2"/>
<polyline points="1134.5,53.0 1162.8,76.1 1180.8,101.8 1187.2,140.3 1188.5,160.9 1183.3,176.3 1170.5,196.8 1155.1,212.3 1156.4,223.8 1146.1,232.8 1141.0,253.4 1144.8,263.6 1137.1,276.2"/>
<polyline points="1096.0,214.8 1115.3,222.5 1129.4,240.5 1141.0,253.4"/>
<polyline points="1137.1,273.9 1157.6,271.3 1166.6,264.9"/>
<polyline points="1183.3,53.0 1198.7,71.0 1209.0,96.7 1232.1,117.2 1250.1,132.6 1275.8,148.0 1301.5,160.9 1327.2,176.3 1352.9,189.1 1378.6,202.0 1404.2,217.4 1417.1,225.1 1430.7,227.7"/>
<polyline points="1214.2,53.0 1229.6,68.4 1255.3,78.7 1280.9,99.2 1293.8,101.8"/>
<polyline points="1229.6,83.8 1260.4,98.0 1286.1,101.8"/>
<polyline points="1275.8,53.0 1273.2,63.3 1291.2,91.5 1296.4,104.4 1322.0,119.8 1332.3,130.1 1337.5,145.5 1346.4,148.0 1345.2,155.7 1352.9,151.9 1360.6,148.0 1361.9,158.3 1368.3,154.5 1378.6,159.6 1381.1,166.0 1399.1,166.0 1409.4,173.7 1417.1,196.8 1414.5,212.3 1427.4,225.1"/>
<polyline points="1198.7,227.2 1209.0,227.2 1216.7,231.5 1224.4,230.2 1250.1,237.9 1270.7,231.5 1280.9,232.8 1306.6,222.5 1327.2,223.8 1334.9,231.5 1352.9,232.8 1355.4,236.7 1372.1,230.2 1394.0,225.1 1409.4,227.7 1427.4,225.1"/>
<polyline points="1288.7,214.3 1301.5,214.8 1309.2,220.0 1324.6,221.3 1332.3,230.2"/>
<polyline points="1401.7,53.0 1404.2,63.3 1401.7,83.8 1391.4,104.4 1386.3,127.5 1381.1,140.3 1391.4,155.7 1381.1,166.0"/>
<polyline points="1418.4,78.7 1406.8,99.2 1391.4,122.4 1386.3,127.5"/>
<polyline points="1359.3,103.1 1359.3,117.2 1365.7,121.1 1370.9,132.6 1376.0,141.6 1381.1,140.3"/>
<polyline points="1430.7,98.0 1422.2,117.2 1417.1,130.1 1419.7,137.8 1418.4,160.9 1412.0,178.9 1417.1,196.8"/>
<polyline points="1430.7,191.7 1422.2,194.3 1414.5,212.3"/>
<polyline points="1288.7,258.5 1298.9,255.9 1309.2,258.5 1313.1,276.2"/>
<polyline points="1338.7,257.2 1350.3,266.2 1355.4,276.2"/>
<polyline points="1117.8,227.0 1129.4,239.8 1143.5,255.3 1143.5,263.0"/>
<polyline points="1137.1,273.2 1157.6,270.7 1166.6,265.0"/>
<polyline points="1147.4,227.0 1144.8,242.4 1141.0,252.7"/>
<polyline points="1187.2,300.7 1198.7,304.1 1209.0,315.6 1215.4,307.9"/>
<polyline points="1209.0,315.6 1206.5,322.0 1219.3,329.7 1224.4,332.3 1228.3,340.0 1219.3,350.3 1198.7,347.7"/>
<polyline points="1228.3,340.0 1245.0,337.5 1255.3,333.6 1265.5,337.5 1270.7,347.7 1280.9,354.2 1273.2,359.3 1263.0,364.4"/>
<polyline points="1280.9,354.2 1286.1,363.1 1301.5,376.0 1319.5,382.4 1323.3,378.6 1337.5,382.4 1352.9,383.7"/>
<polyline points="1254.0,311.8 1255.3,329.7 1251.4,334.9"/>
<polyline points="1289.9,257.8 1309.2,260.4 1314.3,278.4 1328.5,288.6 1342.6,296.4 1352.9,304.1 1358.0,314.3 1368.3,324.6 1373.4,347.7 1378.6,370.8 1381.1,391.4 1373.4,411.9 1368.3,424.8 1373.4,440.2 1378.6,450.2"/>
<polyline points="1338.7,257.8 1352.9,270.7 1358.0,301.5"/>
<polyline points="1315.6,315.6 1316.9,342.6 1319.5,347.7 1342.6,355.4 1349.0,363.1 1352.9,383.7 1358.0,401.7 1363.1,411.9 1358.0,429.9 1368.3,445.3"/>
<polyline points="1414.5,320.8 1420.9,329.7 1418.4,355.4 1419.7,370.8 1415.8,391.4 1422.2,406.8 1430.7,417.1"/>
<polyline points="1148.7,363.1 1153.8,376.0 1162.8,386.3 1173.1,401.7 1179.5,414.5 1178.2,427.4 1157.6,440.2"/>
<polyline points="1096.0,369.6 1107.6,373.4"/>
<polyline points="1096.0,401.7 1121.7,411.9 1142.2,420.9 1149.9,432.5 1156.4,450.2"/>
<polyline points="1137.1,406.8 1136.6,418.4"/>
<polyline points="1157.6,451.0 1167.9,481.8 1183.3,502.4 1198.7,522.9 1209.0,553.7 1219.3,584.6 1227.0,615.4 1232.1,641.1 1229.6,674.2"/>
<polyline points="1180.8,489.5 1184.6,522.9 1198.7,561.5 1214.2,584.6 1224.4,605.1"/>
<polyline points="1196.2,493.4 1211.6,525.5 1229.6,548.6 1245.0,576.9 1255.3,589.7 1275.8,582.0 1284.8,578.2"/>
<polyline points="1211.6,497.2 1229.6,520.4 1250.1,533.2 1270.7,558.9 1284.8,578.2 1301.5,594.8 1309.2,610.3 1310.5,630.8"/>
<polyline points="1310.5,620.5 1283.5,630.8 1250.1,630.8 1234.7,623.1"/>
<polyline points="1270.7,487.0 1260.4,499.8 1260.4,530.6 1275.8,553.7 1284.8,578.2"/>
<polyline points="1173.1,512.6 1167.9,535.8 1162.8,564.0 1160.2,594.8 1155.1,610.3"/>
<polyline points="1155.1,515.2 1153.8,548.6 1164.1,540.9"/>
<polyline points="1180.8,597.4 1198.7,596.9 1202.6,620.5 1197.5,630.8"/>
<polyline points="1379.8,451.0 1386.3,474.1 1397.8,481.8 1394.0,502.4 1404.2,517.8 1414.5,528.1 1427.4,546.0 1430.7,564.0"/>
<polyline points="1376.0,529.3 1391.4,530.6 1404.2,540.9 1412.0,558.9 1417.1,571.7 1414.5,584.6"/>
<polyline points="1337.5,489.5 1352.9,487.0 1368.3,479.3 1381.1,471.5"/>
<polyline points="1368.3,494.7 1383.7,502.4 1397.8,512.6"/>
<polyline points="1101.1,451.0 1111.4,479.3 1121.7,515.2 1129.4,553.7 1142.2,594.8 1149.9,630.8"/>
<polyline points="1096.0,461.3 1106.3,484.4 1116.5,528.1 1124.3,561.5"/>
<polyline points="1096.0,665.3 1121.7,666.5 1137.1,670.4 1147.4,683.2 1155.1,701.2 1162.8,714.1 1178.2,721.8 1185.9,729.5"/>
<polyline points="1106.3,688.4 1126.8,692.2 1142.2,703.8 1149.9,716.6 1160.2,724.3"/>
<polyline points="1224.4,637.0 1227.0,657.5 1234.7,675.5 1237.3,688.4 1229.6,698.6"/>
<polyline points="1057.8,346.4 1068.1,341.2 1088.8,331.9 1098.1,322.7 1104.3,315.4 1107.4,297.9 1118.7,290.6 1133.2,286.5 1138.3,279.3 1140.0,273.1"/>
</g>
<polygon points="876.0,228.0 905.6,225.0 923.6,218.7 957.0,218.0 978.8,225.0 987.8,243.7 988.0,262.0 986.5,278.4 978.8,296.4 971.9,317.0 973.0,327.0 981.4,345.0 993.0,362.0 1016.0,368.0 1023.7,378.5 1025.5,395.0 1025.0,407.0 1022.5,425.0 1013.5,434.0 990.4,434.0 975.0,426.0 954.4,422.7 939.6,425.8 937.5,440.0 936.4,451.0 933.8,457.0 910.7,462.5 906.9,480.5 895.3,496.0 875.0,503.0 853.0,509.5 834.8,504.0 801.5,498.5 770.0,497.5 742.0,497.0 720.0,490.0 701.0,483.0 697.5,462.5 703.8,453.7 719.5,440.5 745.0,438.5 770.0,437.0 780.7,422.0 783.0,390.0 786.0,349.0 798.0,335.0 825.0,334.5 848.8,334.0 867.0,328.5 870.0,314.0 871.7,291.0 865.0,282.0 868.0,262.0 871.7,247.5" fill="rgba(255,255,255,0.2)" stroke="#000" stroke-width="3" stroke-linejoin="round"/>
<text x="668" y="364" font-family="'Liberation Mono','Noto Sans CJK JP',monospace" font-size="18" font-weight="bold" font-style="italic" fill="#000" xml:space="preserve" textLength="388" lengthAdjust="spacingAndGlyphs">30.1 平方キロメートル 27.7 キロメートル</text>

</svg>

<div id="strip" class="abs"></div>
<div id="foot" class="abs">All Rights Reserved</div>
<!-- toolbar icons -->
<svg class="abs" style="left:0;top:54px" width="454" height="56" viewBox="0 54 454 56" fill="#fff">
<!-- legend -->
<path d="M20 74.5 L23 69.5 L26 74.5Z"/><rect x="20" y="80.5" width="5.6" height="5.6"/><circle cx="22.8" cy="94.3" r="3"/>
<rect x="28" y="70.8" width="20.3" height="2.6"/><rect x="28" y="82" width="20.3" height="2.6"/><rect x="28" y="93" width="20.3" height="2.6"/>
<!-- layers -->
<path d="M124.2 68.8 L138.4 76.8 L124.2 84.8 L110 76.8Z"/>
<path d="M110 82.6 L113.6 80.6 L124.2 86.6 L134.8 80.6 L138.4 82.6 L124.2 90.8Z"/>
<path d="M110 88.8 L113.6 86.8 L124.2 92.8 L134.8 86.8 L138.4 88.8 L124.2 97.2Z"/>
<!-- add data -->
<path d="M203.7 73.7 H205.9 V79.2 H210 V83 H217.4 V79.2 H221.6 V73.7 H224.2 L227.1 94.7 Q221.5 92.2 214.2 95 Q206.5 97.8 200.7 94.9Z"/>
<rect x="211.7" y="69" width="3.9" height="12"/><rect x="207.6" y="73.7" width="12.2" height="3.9"/>
<!-- select -->
<path d="M296.9 69.4 H301.7 V75.1 L306.6 86.7 L302.9 87.3 L296.9 83.6Z"/>
<path d="M303.3 69.6 H315.3 V73.7 L310.8 73.9 L305.4 78 L303.3 74.7Z M304.9 70.9 V74.9 L305.7 76.4 L310.5 72.7 L313.8 72.5 V70.9Z" fill-rule="evenodd"/>
<path d="M315.3 76 V87.3 H309.5 L306.2 79.9 L311.2 76.4Z M313.8 77.3 L311.5 77.5 L308.1 80.4 L310.6 85.8 H313.8Z" fill-rule="evenodd"/>
<path d="M292.2 83.2 L301.9 88.2 L298.4 89.2 L300.9 94.3 L298.6 95.8 L295.9 90.8 L292.2 93.7Z"/>
<!-- menu -->
<rect x="379.6" y="68.8" width="26.6" height="4.2"/><rect x="379.6" y="80" width="26.6" height="4.2"/><path d="M379.6 91.2 H398.5 L394.5 95.4 H379.6Z"/><path d="M408 88 V97 H398Z"/>
</svg>

<!-- legend panel -->
<svg class="abs" style="left:2px;top:136px" width="100" height="25" viewBox="0 0 100 25"><path d="M0 25 V6 Q0 0 6 0 H62 Q67 0 70 4 L80 19 Q84 25 90 25Z" fill="#fff"/></svg>
<div class="abs" style="left:18px;top:142px;font-size:15.5px;line-height:19px;color:#333">凡例</div>
<svg class="abs" style="left:28px;top:180px" width="28" height="300" viewBox="28 180 28 300">
<polygon points="29,182 54,194 54,207 29,207" fill="#3f7896"/>
<g stroke="#9c9c9c" stroke-width="1.4">
<polygon points="29.2,305.5 53.9,317 53.9,329.5 29.2,329.5" fill="#73b2ff"/>
<polygon points="29.2,342.5 53.9,354 53.9,366.5 29.2,366.5" fill="#0070ff"/>
<polygon points="29.2,380.5 53.9,392 53.9,404.5 29.2,404.5" fill="#b7d25a"/>
<polygon points="29.2,417.5 53.9,429 53.9,441.5 29.2,441.5" fill="#ff9622"/>
<polygon points="29.2,455.5 53.9,467 53.9,479.5 29.2,479.5" fill="#e60000"/>
</g></svg>
<div class="abs lh" style="top:241px;font-size:19px;width:385px"><span style="-webkit-text-stroke:0">浸水想定区域</span> Fixed / Anticipated Inundation Area</div>
<div class="abs li" style="top:309px">0～0.5m未満</div>
<div class="abs li" style="top:346px">0.5～1.0m未満</div>
<div class="abs li" style="top:384px">1.0～2.0m未満</div>
<div class="abs li" style="top:421px">2.0～5.0m未満</div>
<div class="abs li" style="top:459px">5.0m以上</div>
<div class="abs lh" style="top:514px;font-size:18px;-webkit-text-stroke:.2px #000">降水ナウキャスト 5分 (台風接近時)</div>
<div class="abs sq" style="top:549px;background:#bffeff"></div><div class="abs li" style="top:555px">0～1mm</div>
<div class="abs sq" style="top:578px;background:#8ff0ff"></div><div class="abs li" style="top:584px">1～5mm</div>
<div class="abs sq" style="top:607px;background:#42c6ef"></div><div class="abs li" style="top:613px">5～10mm</div>
<div class="abs sq" style="top:636px;background:#476fee"></div><div class="abs li" style="top:642px">10～20mm</div>
<div class="abs sq" style="top:665px;background:#ffff42"></div><div class="abs li" style="top:671px">20～30mm</div>
<div class="abs sq" style="top:694px;background:#ffb940"></div><div class="abs li" style="top:700px">30～50mm</div>
<div class="abs sq" style="top:723px;background:#ff4248"></div><div class="abs li" style="top:729px">50～80mm</div>
<div class="abs sq" style="top:752px;background:#a75c80"></div><div class="abs li" style="top:758px">80mm～</div>
<!-- scrollbar -->
<div class="abs" style="left:433px;top:161px;width:18px;height:645px;background:#f1f1f1"></div>
<div class="abs" style="left:433px;top:300px;width:18px;height:485px;background:#c8c8c8"></div>
<svg class="abs" style="left:433px;top:161px" width="18" height="645" viewBox="0 0 18 645" fill="none" stroke="#505050" stroke-width="1.8"><path d="M4.5 13.5 L9 8.8 L13.5 13.5"/><path d="M4.5 630 L9 634.7 L13.5 630"/></svg>
<div class="abs" style="left:452px;top:133px;width:1px;height:675px;background:#222"></div>
<div class="abs" style="left:2px;top:806px;width:451px;height:1.5px;background:#222"></div>
<!-- collapse -->
<svg class="abs" style="left:414px;top:822px" width="20" height="12" viewBox="0 0 20 12" fill="#e4e4e4"><path d="M1.5 6 L8.5 1.5 V10.5Z M9.5 6 L16.5 1.5 V10.5Z"/></svg>

<!-- map widgets -->
<div class="abs wbtn" style="left:464px;top:60px;width:38px;height:75px"></div>
<div class="abs" style="left:464px;top:96px;width:38px;height:1px;background:rgba(60,60,80,.55)"></div>
<svg class="abs" style="left:464px;top:60px" width="38" height="75" viewBox="0 0 38 75" fill="#fff"><rect x="9.2" y="15.6" width="19.6" height="3"/><rect x="17.5" y="7.3" width="3" height="19.6"/><rect x="11.5" y="53.6" width="15" height="3"/></svg>
<div class="abs wbtn" style="left:464px;top:148px;width:38px;height:37px"></div>
<svg class="abs" style="left:464px;top:148px" width="38" height="37" viewBox="0 0 38 37" fill="#fff"><path d="M18.8 6.2 L30.9 17.8 H28.8 V29.7 H22.5 V24.2 H15.6 V29.7 H9.3 V17.8 H6.1Z"/><rect x="25.1" y="9.4" width="3.5" height="6"/></svg>
<div class="abs wbtn" style="left:464px;top:192px;width:38px;height:35px;background:rgba(0,0,0,.16)"></div>
<svg class="abs" style="left:464px;top:192px" width="38" height="35" viewBox="0 0 38 35" fill="none" stroke="rgba(255,255,255,.32)" stroke-width="2"><circle cx="18.8" cy="17.1" r="11"/><path d="M18.8 7 V10.5 M18.8 23.7 V27.2 M8.7 17.1 H12.2 M25.4 17.1 H28.9" stroke-width="1.4"/></svg>

<!-- search -->
<div class="abs" style="left:512px;top:60px;width:342px;height:42px;background:#fff;border:1px solid #57585a;border-radius:4px"></div>
<div class="abs" style="left:553px;top:61px;width:1px;height:40px;background:#57585a"></div>
<div class="abs" style="left:812px;top:61px;width:1px;height:40px;background:#57585a"></div>
<svg class="abs" style="left:523px;top:76px" width="20" height="11" viewBox="0 0 20 11"><path d="M1 1 H19 L10 10Z" fill="#4c4c4c"/></svg>
<div class="abs" style="left:569px;top:69px;font-size:17.5px;line-height:26px;color:#9a9a9a;white-space:nowrap">住所または場所の検索</div>
<svg class="abs" style="left:822px;top:69px" width="24" height="24" viewBox="0 0 24 24" fill="none" stroke="#484848"><circle cx="8.4" cy="8.7" r="6.5" stroke-width="1.9"/><path d="M13 13.3 L16 16" stroke-width="1.9"/><path d="M15.6 15.6 L19.2 19" stroke-width="3.3" stroke-linecap="round"/></svg>

<!-- top right buttons -->
<div class="abs" style="left:1245px;top:66px;width:50px;height:50px;background:rgba(0,0,0,.2);border:1px solid rgba(20,20,20,.65);border-radius:5px"></div>
<svg class="abs" style="left:1245px;top:66px" width="50" height="50" viewBox="0 0 50 50" fill="none" stroke="#fff" stroke-width="2.2"><path d="M17.8 30.3 A10.1 10.1 0 1 0 16.6 23.9"/><path d="M13.3 23.4 L19.2 23.6 L16.1 26.9Z" fill="#fff" stroke="none"/><path d="M26.4 18.2 V25.2 L32 28.7" stroke-width="1.7"/></svg>
<div class="abs" style="left:1370px;top:66px;width:50px;height:50px;background:rgba(0,0,0,.2);border:1px solid rgba(20,20,20,.65);border-radius:5px"></div>
<svg class="abs" style="left:1370px;top:66px" width="50" height="50" viewBox="0 0 50 50"><defs><mask id="pm"><rect width="50" height="50" fill="#fff"/><rect x="19.9" y="10" width="2.9" height="30" fill="#000"/><circle cx="29" cy="20.4" r="2"/><circle cx="33.1" cy="25.2" r="2"/><circle cx="30" cy="31.3" r="2.1"/><ellipse cx="16.8" cy="25.2" rx="2.1" ry="1.4"/><ellipse cx="25" cy="24.7" rx="1.7" ry="1.3"/></mask></defs><path d="M13.2 24.5 Q13.4 20 18.5 18.8 Q22 16.2 28 16.2 Q37.6 17 38 26 Q37.5 34.5 28 35.6 Q23.5 35.8 22.6 34 L20 33.6 L14.5 28 Q13 26.5 13.2 24.5Z" fill="#fff" mask="url(#pm)"/><rect x="20.8" y="16" width="1.1" height="21.4" fill="#fff"/><ellipse cx="21.35" cy="15.6" rx="1.3" ry="2.4" fill="#fff"/></svg>

<!-- scalebar -->
<svg class="abs" style="left:466px;top:786px" width="150" height="26" viewBox="466 786 150 26"><path d="M468.8 804.5 V809.6 H587 V804.5" fill="none" stroke="#44607e" stroke-width="2.2"/><text x="580" y="800.3" font-family="'Liberation Sans',sans-serif" font-size="13" font-weight="bold" fill="#5a6e90">3km</text></svg>
<!-- coordinate -->
<div class="abs" style="left:468px;top:815px;width:149px;height:21px;background:rgba(0,0,0,.5)"></div>
<div class="abs" style="left:468px;top:815px;width:20px;height:21px;background:rgba(120,120,60,.35);border-right:1px solid rgba(255,255,255,.45)"></div>
<svg class="abs" style="left:468px;top:815px" width="20" height="21" viewBox="0 0 20 21" fill="#ddd"><rect x="8.2" y="8.7" width="3.6" height="3.6"/><rect x="9.5" y="3.5" width="1" height="3.5"/><rect x="9.5" y="14" width="1" height="3.5"/><rect x="3" y="10" width="3.5" height="1"/><rect x="13.5" y="10" width="3.5" height="1"/></svg>
<div class="abs" style="left:496px;top:815px;font-size:14px;line-height:21px;color:#fff;white-space:nowrap">139.237 35.282 度</div>
<!-- bottom toggle -->
<div class="abs" style="left:677px;top:821px;width:78px;height:21px;background:rgba(0,0,0,.65);border:2px solid #e8e8e8;border-bottom:none;border-radius:9px 9px 0 0"></div>
<svg class="abs" style="left:707px;top:828px" width="16" height="9" viewBox="0 0 16 9"><path d="M8 0.5 L14.5 8 H1.5Z" fill="#c8c4b8"/></svg>
<div class="abs" style="left:703px;top:846px;width:24px;height:1px;background:#bbb"></div>
<!-- attribution -->
<div class="abs" style="left:899px;top:817px;width:439px;height:19px;background:rgba(255,255,255,.68);font-size:15px;letter-spacing:.3px;line-height:19px;color:#323232;padding-left:5px;white-space:nowrap;overflow:hidden">Earthstar Geographics, CNES/Airbus DS | ESRIジャパン ...</div>
<!-- esri logo -->
<div class="abs" style="left:1351px;top:792px;font-size:9px;font-weight:bold;color:#fff;line-height:12px;white-space:nowrap;letter-spacing:-.3px">POWERED BY</div>
<div class="abs" style="left:1347px;top:793px;font-size:42px;font-weight:bold;color:#fff;line-height:46px;letter-spacing:.2px;white-space:nowrap;text-shadow:0 0 3px rgba(0,0,0,.35)">esri</div>
<div class="abs" style="left:1412px;top:794px;width:8.6px;height:8.6px;border-radius:4.3px;background:#fff"></div>
<svg class="abs" style="left:1411px;top:820px" width="20" height="22" viewBox="1411 820 20 22"><path d="M1414.5 823.5 L1427.7 824 L1423.2 828.5 L1431.5 836.3 L1426.4 840.9 L1419 832.7 L1414.5 837.2Z" fill="#e9ebee" stroke="#6a6a6a" stroke-width="1.2"/></svg>

</body></html>
